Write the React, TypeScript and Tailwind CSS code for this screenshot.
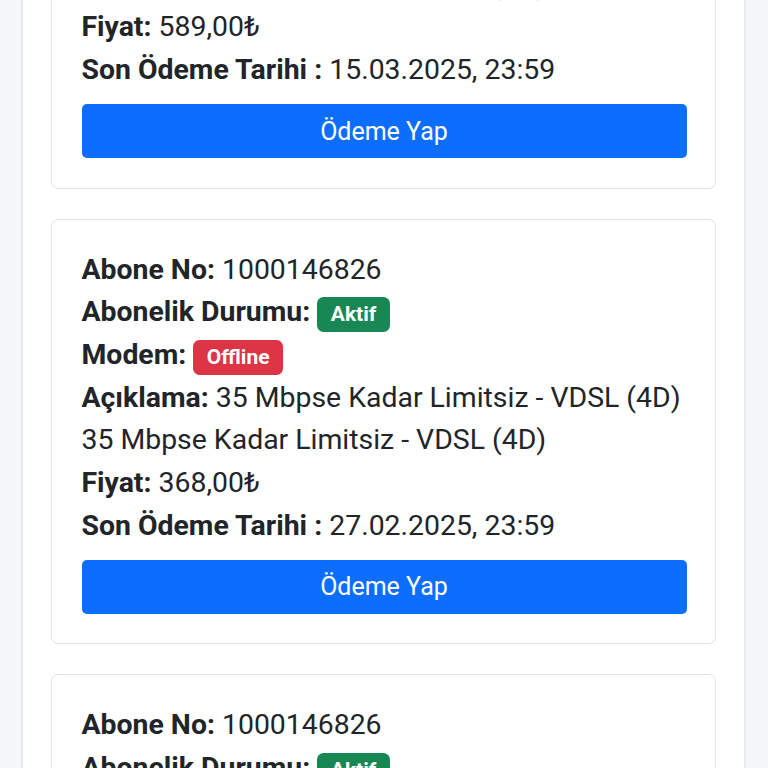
import React from "react";

type Card = {
  no: string;
  status: string;
  modem: string;
  desc: string;
  price: string;
  due: string;
};

const cards: Card[] = [
  {
    no: "1000146826",
    status: "Aktif",
    modem: "Offline",
    desc: "35 Mbpse Kadar Limitsiz - VDSL (4D)",
    price: "589,00₺",
    due: "15.03.2025, 23:59",
  },
  {
    no: "1000146826",
    status: "Aktif",
    modem: "Offline",
    desc: "35 Mbpse Kadar Limitsiz - VDSL (4D)",
    price: "368,00₺",
    due: "27.02.2025, 23:59",
  },
  {
    no: "1000146826",
    status: "Aktif",
    modem: "Offline",
    desc: "35 Mbpse Kadar Limitsiz - VDSL (4D)",
    price: "368,00₺",
    due: "27.02.2025, 23:59",
  },
];

function Badge({ children, tone }: { children: React.ReactNode; tone: "green" | "red" }) {
  return (
    <span
      className={
        "inline-block rounded-[6.5px] px-[13.5px] py-[7px] text-[21px] leading-none font-bold text-white align-baseline " +
        (tone === "green" ? "bg-[#198754]" : "bg-[#dc3545]")
      }
    >
      {children}
    </span>
  );
}

function SubCard({ c }: { c: Card }) {
  return (
    <div className="mb-[30px] rounded-[7px] border-[1.5px] border-[#e0e2e5] bg-white pt-[29px] pb-[29.5px] pl-[29.5px] pr-[28.5px]">
      <div>
        <b className="font-bold">Abone No:</b> {c.no}
      </div>
      <div>
        <b className="font-bold">Abonelik Durumu:</b> <Badge tone="green">{c.status}</Badge>
      </div>
      <div>
        <b className="font-bold">Modem:</b> <Badge tone="red">{c.modem}</Badge>
      </div>
      <div>
        <b className="font-bold">Açıklama:</b> {c.desc}
      </div>
      <div>{c.desc}</div>
      <div>
        <b className="font-bold">Fiyat:</b> {c.price}
      </div>
      <div>
        <b className="font-bold">Son Ödeme Tarihi :</b> {c.due}
      </div>
      <button className="mt-[12.5px] block w-full rounded-[5px] bg-[#0d6efd] py-[8.5px] text-[25px] leading-[37px] text-white">
        Ödeme Yap
      </button>
    </div>
  );
}

export default function App() {
  return (
    <div
      className="h-[768px] overflow-hidden bg-[#f6f7f9] pl-[21px] pr-[22px] text-[28.4px] leading-[42.67px] text-[#212529]"
      style={{ fontFamily: "Roboto, 'Liberation Sans', sans-serif" }}
    >
      <div className="border-x-2 border-[#e9eaec] bg-white px-[28px]">
        <div className="-mt-[237px]">
          {cards.map((c, i) => (
            <SubCard key={i} c={c} />
          ))}
        </div>
      </div>
    </div>
  );
}
